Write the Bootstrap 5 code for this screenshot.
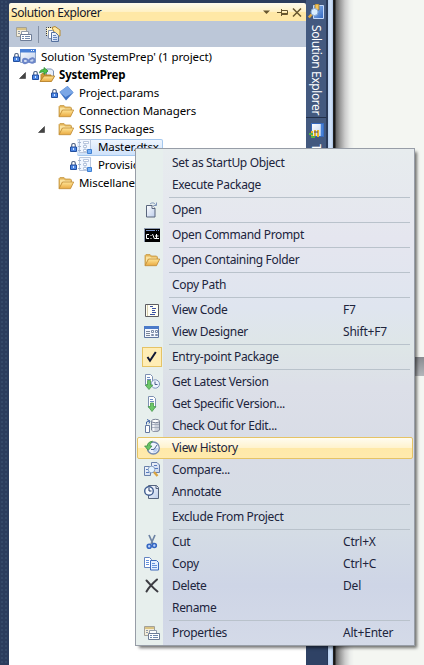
<!DOCTYPE html>
<html lang="en">
<head>
<meta charset="utf-8">
<meta name="viewport" content="width=device-width, initial-scale=1">
<title>Solution Explorer</title>
<link href="https://cdn.jsdelivr.net/npm/bootstrap@5.3.0/dist/css/bootstrap.min.css" rel="stylesheet">
<style>
body{width:424px;height:665px;background:#f4f6f2;font:12px/18px "Noto Sans","Open Sans",sans-serif;color:#000}
svg{display:block;flex:none}
.edge{width:9px;background-color:#2c3d5d;background-image:radial-gradient(#354968 35%,transparent 40%);background-size:4px 4px}
.pane{width:297px;padding-top:3px;background:#2c3d5d}
.pane-title{height:18px;padding:0 4px 0 2px;background:linear-gradient(#fffbec,#fff1c5 48%,#ffe8a6 52%,#ffe8a6);border-radius:2px 2px 0 0;color:#15182a;line-height:17px;letter-spacing:-.38px}
.pane-tools{height:26px;background:#bcc7d8;padding-left:7px}
.tool-line{width:1px;height:17px;background:#8591a5;margin:0 6px 0 6px}
.tree{background:#fff;padding-top:1px}
.node{height:18px;font-size:11.5px;letter-spacing:-.09px;white-space:nowrap}
.node .lock{width:7px}
.lv0{padding-left:4px}.lv1{padding-left:10px}.lv2{padding-left:42px}.lv2x{padding-left:29px}.lv3{padding-left:61px}
.lv1 .lock{margin-left:6px}
.lv2x .arrow{margin-right:13px}
.node-label{margin-left:5px}
.lv1 .node-label{margin-left:4px;letter-spacing:-.15px}
.picked{height:17px;border:1px solid #a5c8ee;border-left:0;border-radius:2px;background:linear-gradient(#eef5fe,#cfe2fa);padding-right:3px}
.side{width:21px;background:#2f4265}
.side-tab{width:21px;background:#43597f;border-right:1px solid #2b3b59;border-bottom:1px solid #22304a;color:#fff;padding-top:5px}
.side-tab.first{height:118px;padding-top:4px}
.side-tab span{writing-mode:vertical-rl;line-height:19px;margin-top:5px;white-space:nowrap;letter-spacing:-.4px}
.rim{width:7px;background:linear-gradient(90deg,#273858 1px,#b9d1f2 1px,#d3e4fa 4px,#a9c1e2 6px,#222 6px)}
.shade{width:20px;background:linear-gradient(90deg,#161616 0 1px,#666 2px,#999 6px,#ccc 11px,#eaecea 16px,#f4f6f2)}
.far-band{height:19px;margin-top:357px;background:linear-gradient(#898b90,#b4b7bb)}
.ctx{left:135px;top:148px;width:280px;height:498px;padding:3px 1px 1px;border:1px solid #979da7;box-shadow:3px 3px 3px -1px rgba(0,0,0,.55);color:#20243c;
background:linear-gradient(90deg,#e7efed 27px,transparent 27px),linear-gradient(#e7ecee 0,#e5e6ef 18%,#dfe5ef 32%,#dee6e7 40%,#dcdfe8 48%,#d8dce6 62%,#d5dde5 76%,#ced5e6 88%,#d4dae8)}
.cmd{height:22px;line-height:20px;padding:0 1px;border:1px solid transparent;white-space:nowrap}
.cmd-icon{width:26px;height:22px}
.cmd-name{width:171px;margin-left:7px;letter-spacing:-.33px}
.cmd-key{letter-spacing:-.2px}
.cmd.hot{border-color:#e5c365;border-radius:2px;background:linear-gradient(#fffcf0,#fff3cf 48%,#ffe9a8 52%,#ffeaae)}
.rule{height:1px;margin:1px 3px 1px 32px;background:#b9c2cb}
.ticked{width:20px;height:20px;border:1px solid #e5c365;background:#ffedb5}
</style>
<script src="https://cdn.jsdelivr.net/npm/bootstrap@5.3.0/dist/js/bootstrap.bundle.min.js"></script>
</head>
<body class="overflow-hidden position-relative m-0">
<svg width="0" height="0" class="position-absolute">
<defs>
<linearGradient id="gold" x2="0" y2="1"><stop stop-color="#ffe596"/><stop offset="1" stop-color="#e9a940"/></linearGradient>
<linearGradient id="blue" x2="1" y2="1"><stop stop-color="#9cc4f5"/><stop offset="1" stop-color="#2c62bd"/></linearGradient>
<linearGradient id="paper" x2="1" y2="1"><stop stop-color="#fff"/><stop offset="1" stop-color="#bccdeb"/></linearGradient>
</defs>
<symbol id="lock" viewBox="0 0 7 9"><path d="M1.700 4V2.300a1.800 1.800 0 0 1 3.600 0V4" fill="none" stroke="#5a6c8c" stroke-width="1.200"/><path d="M.5 4h6v4.500h-6z" fill="#4c86e4" stroke="#234f9e"/><path d="M3 5h1v2H3z" fill="#d8e8ff"/></symbol>
<symbol id="folder" viewBox="0 0 16 16"><path d="M1 13.500V3.500l1-1h4l1.500 1.500h5l1 1V8" fill="#e3b45a" stroke="#c89c4a" stroke-width=".8"/><path d="M2 4.500h4l1 1h5.500V7H4L2 11z" fill="#fbe3a0"/><path d="M1 13.700 4.500 7h11.200l-3.200 6.700z" fill="url(#gold)" stroke="#bf8a35" stroke-width=".8"/></symbol>
<symbol id="props" viewBox="0 0 16 16"><path d="M.5 1.500h10v9H.5z" fill="#f4edda" stroke="#a3a199"/><path d="M1 2h9v2H1z" fill="#d9c384"/><path d="M2 5.500h2M2 7.500h2" stroke="#8e99a8"/><path d="M5.500 5.500h7v3h-7z" fill="#fff" stroke="#909bab"/><path d="M4.500 8.500h11v6h-11z" fill="#fff" stroke="#6d7c97"/><path d="M6 10.500h2m1 0h5m-8 2h2m1 0h5" stroke="#7189ad"/></symbol>
<symbol id="showall" viewBox="0 0 16 16"><path d="M1.500 10V1.500H12" fill="#fff5cb" stroke="#333" stroke-dasharray="1 1"/><path d="M7 1.500l3-1 5 3.500v6h-4z" fill="#ffe7a0" stroke="#b58a30"/><path d="M3.500 4.500h4l2 2v6h-6z" fill="#fff" stroke="#8292b0"/><path d="M6.500 6.500h4l3 3v6h-7z" fill="url(#paper)" stroke="#56719f"/><path d="M8 9.500h3m-3 2h4m-4 2h4" stroke="#6487c2"/></symbol>
<symbol id="sln" viewBox="0 0 16 16"><path d="M.5.5h15v13H.5z" fill="url(#paper)" stroke="#8fa5c8"/><path d="M0 0h16v3.500H0z" fill="#4a80d6"/><path d="M11 1.500h1m1 0h1" stroke="#fff"/><path d="M8.500 12C6.500 9 3 9.300 3 12s3.500 3 5.500 0 6-3.800 6-.7-4 3.200-6 .7z" fill="none" stroke="#6c86c9" stroke-width="2"/></symbol>
<symbol id="proj" viewBox="0 0 16 16"><path d="M7.500 2h5l2 2v7h-7z" fill="#e6edfa" stroke="#7f93b5"/><path d="M2 14V7.500l1-1h3l1 1.500h5V10" fill="#ce9836" stroke="#bd8c35"/><path d="M1 14.500 5 9h10.700l-3.200 5.500z" fill="url(#gold)" stroke="#af771c" stroke-width=".8"/><path d="M.5 6C1 3 2.500 2.500 5 2.500V.5L9 4 5 7.500V5C3 5 1.500 5.200.5 6z" fill="#4ec146" stroke="#2d8a34" stroke-width=".8"/></symbol>
<symbol id="param" viewBox="0 0 16 16"><path d="M1.500 7 9.500 1 15.500 7.500 8 15.500z" fill="#3d72c4"/><path d="M1.500 7 9.500 1 15.500 7.500 7.500 12z" fill="#7ba7e6"/></symbol>
<symbol id="pkg" viewBox="0 0 16 16"><path d="M2.500.5h11v13h-11z" fill="#f2f7ff" stroke="#bac7dc"/><path d="M1 3.500h3m-3 4h3m-3 4h3" stroke="#a5b6d2"/><path d="M6.500 2.500h5v2h-5zm0 4h3v2h-3zm0 4h3v2h-3zM8 4.500v2m0 2v2" fill="#fff" stroke="#a9bad6" stroke-width=".8"/><path d="M10.500 10.500h4v4h-4z" fill="#73b0f8" stroke="#3f7fd2"/></symbol>
<symbol id="seek" viewBox="0 0 16 16"><path d="M5.500 1.500h10v13h-10z" fill="url(#blue)" stroke="#c5dafb"/><path d="M7 0h4v6H7z" fill="#f2c45b" stroke="#8c6a24" stroke-width=".7"/><path d="M4 10 .8 13.500" stroke="#e4a738" stroke-width="2.500"/><circle cx="6.500" cy="8" r="3.500" fill="#d9edff" stroke="#8aabd6"/></symbol>
<symbol id="team" viewBox="0 0 16 16"><path d="M3.500.5h12v13h-12z" fill="url(#paper)" stroke="#3568bd"/><path d="M14 1v12" stroke="#4780d6" stroke-width="2.500"/><path d="M4 8v6M7 7v6m3-6v7" stroke="#e6b72a" stroke-width="2"/><path d="M1 11h4m-2 3h4" stroke="#58b044" stroke-width="2"/><path d="M6 9h4" stroke="#446"/></symbol>
<symbol id="open" viewBox="0 0 16 16"><path d="M2.500 3.500h5.500l3 3v8.500H2.500z" fill="url(#paper)" stroke="#59657c"/><path d="M8 3.500v3h3" fill="#fff" stroke="#59657c"/><path d="M6 2c2-1.800 4.500-1.300 5.500.7M12.500.5v3H9.500" fill="none" stroke="#7d93b8"/></symbol>
<symbol id="cli" viewBox="0 0 16 16"><path d="M0 1h16v14H0z" fill="#000"/><path d="M0 1.500h16M.5 1v14" stroke="#8b97ad"/><path d="M2 3.500h9m1 0h1m1 0h1" stroke="#7894cd"/><path d="M5 7.500H2.500v4H5m2-3.500v1m0 2v1m1.500-5 2 5m2-5v4m-1.500-2h3.500M11 11.500h4" fill="none" stroke="#fff"/></symbol>
<symbol id="code" viewBox="0 0 16 16"><path d="M1.500 2.500h13v12h-13z" fill="#fffef4" stroke="#5d5d62"/><path d="M3.500 3v11" stroke="#d6cfae"/><path d="M6 4.500h3m-1 2h4m-4 2h3m-3 2h4m-6 2h5" stroke="#3b52a4"/></symbol>
<symbol id="form" viewBox="0 0 16 16"><path d="M.5 2.500h14v11H.5z" fill="#f5f8ff" stroke="#5f76a1"/><path d="M0 2h15v3H0z" fill="#4b7bc9"/><path d="M2 7.500h4m-4 2h4m-4 2h4" stroke="#7a8597"/><path d="M7.500 6.500h2v2h-2zm4 0h2v2h-2zm-4 4h2v1h-2zm4 0h2v1h-2z" fill="#fff" stroke="#7b8ba8"/></symbol>
<symbol id="latest" viewBox="0 0 16 16"><path d="M1.500.5h5l2 2v8h-7z" fill="#fff" stroke="#7e90b1"/><path d="M3 3.500h3m-3 2h4" stroke="#6f8cc2"/><circle cx="11.300" cy="10" r="4.200" fill="#eef4ff" stroke="#7d94bb"/><path d="M11 7.500v3h2.500" fill="none" stroke="#4b5f89"/><path d="M3.500 6.500h3V11h2.300L5 15.500 1.200 11h2.300z" fill="#6cc867" stroke="#4a9a4c" stroke-width=".8"/></symbol>
<symbol id="specific" viewBox="0 0 16 16"><path d="M4.500.5h5l2 2v9h-7z" fill="#fff" stroke="#7e90b1"/><path d="M6 3.500h3m-3 2h4" stroke="#6f8cc2"/><path d="M6.500 7h3v3.500h2.300L8 15.500l-3.800-5h2.300z" fill="#6cc867" stroke="#4a9a4c" stroke-width=".8"/></symbol>
<symbol id="checkout" viewBox="0 0 16 16"><path d="M1.500 7.500h4v7h-4z" fill="#fff" stroke="#6479a0"/><path d="M2.500 6.500V4L5.500 3M3 1.500l3 1.500-1 2.500" fill="none" stroke="#3f62a2"/><path d="M7.500 3v9c1 2 7 2 8 0V3" fill="#cbd0da" stroke="#7b8497"/><ellipse cx="11.500" cy="3" rx="4" ry="1.700" fill="#fff" stroke="#7b8497"/><path d="M9.500 5v8" stroke="#f3f5f9" stroke-width="2"/><path d="M8 6.500h7m-7 3h7" stroke="#99a3b5" stroke-width=".8"/></symbol>
<symbol id="history" viewBox="0 0 16 16"><circle cx="9.300" cy="8" r="6" fill="#eef3fd" stroke="#7288b0" stroke-width="1.300"/><path d="M9.300 12.500A5 5 0 0 0 14 8h-4.500z" fill="#b9cdf0"/><path d="M7 9.500h3L13 5" fill="none" stroke="#51658c"/><path d="M8.500 1.300C5 1.500 3.300 3.700 3.300 6H.6L4.300 10.300 8 6H6c0-2 1-3.500 2.500-4.700z" fill="#67c463" stroke="#419048" stroke-width=".8"/></symbol>
<symbol id="compare" viewBox="0 0 16 16"><path d="M.5 4.500h6v9h-6zM7.500.5h5.500l2.500 2.500v7.500h-8z" fill="url(#paper)" stroke="#6980aa"/><path d="M2 7.500h3m-3 3h3m5-7h3m-3 3h4" stroke="#567bbd"/><circle cx="7.500" cy="7.500" r="3.300" fill="#e3f3ff" stroke="#8ba1c4"/><path d="M10 10l3.500 4" stroke="#d9a443" stroke-width="2.400"/></symbol>
<symbol id="annotate" viewBox="0 0 16 16"><path d="M4.500 1.500h8l2 2v11h-10z" fill="url(#paper)" stroke="#56647f"/><path d="M12 1.500v3h2.500" fill="none" stroke="#56647f"/><circle cx="5" cy="7" r="4.300" fill="#f5f9ff" stroke="#3f5c90" stroke-width="1.400"/><path d="M5 4v3h2.500" fill="none" stroke="#223967"/></symbol>
<symbol id="cut" viewBox="0 0 16 16"><path d="M5 1 9 10M11 1 7 10" stroke="#6c82a3" stroke-width="1.700"/><circle cx="5.200" cy="12.300" r="2" fill="#b9d1fa" stroke="#3567c2" stroke-width="1.600"/><circle cx="10.300" cy="11.500" r="2" fill="#b9d1fa" stroke="#3567c2" stroke-width="1.600"/></symbol>
<symbol id="copy" viewBox="0 0 16 16"><path d="M.5 1.500h5l2 2v8h-7z" fill="#fff" stroke="#6384c2"/><path d="M6.500 4.500h6l2 2v7.500h-8z" fill="#e3eeff" stroke="#3c69ba"/><path d="M2 4.500h3m-3 2h3m-3 2h3m3-1h3m-3 2h5m-5 2h5" stroke="#6591da"/></symbol>
<symbol id="del" viewBox="0 0 16 16"><path d="M2.500 2.500C6 6 9 10 13.500 13.500M13 1.500C9 5 5 9 2.500 13.500" fill="none" stroke="#3c3c42" stroke-width="2" stroke-linecap="round"/></symbol>
<symbol id="tick" viewBox="0 0 16 16"><path d="M3.500 8 6 11.800 11.800 3" fill="none" stroke="#111735" stroke-width="2"/></symbol>
<symbol id="tri" viewBox="0 0 7 7"><path d="M6.500.5v6h-6z" fill="#444" stroke="#222" stroke-width=".5"/></symbol>
</svg>

<div class="d-flex h-100">
  <div class="edge"></div>
  <main class="pane d-flex flex-column">
    <header class="pane-title d-flex align-items-center">
      <span class="me-auto">Solution Explorer</span>
      <svg width="40" height="12" viewBox="0 0 40 12" stroke="#67562e" fill="none"><path d="M1 4.500h7L4.500 8z" fill="#67562e" stroke="none"/><path d="M15 6.500h4M19.500 3v7M20 4.500h5.500v4H20M20 7.500h6"/><path d="M31 2.500l8 8m0-8-8 8" stroke-width="1.500"/></svg>
    </header>
    <div class="pane-tools d-flex align-items-center">
      <svg width="16" height="16"><use href="#props"/></svg><div class="tool-line"></div><svg width="16" height="16"><use href="#showall"/></svg>
    </div>
    <div class="tree flex-grow-1">
      <div class="node d-flex align-items-center lv0"><svg class="lock" height="9"><use href="#lock"/></svg><svg width="16" height="16"><use href="#sln"/></svg><span class="node-label">Solution 'SystemPrep' (1 project)</span></div>
      <div class="node d-flex align-items-center lv1"><svg width="7" height="7"><use href="#tri"/></svg><svg class="lock" height="9"><use href="#lock"/></svg><svg width="16" height="16"><use href="#proj"/></svg><b class="node-label">SystemPrep</b></div>
      <div class="node d-flex align-items-center lv2"><svg class="lock" height="9"><use href="#lock"/></svg><svg width="16" height="16"><use href="#param"/></svg><span class="node-label">Project.params</span></div>
      <div class="node d-flex align-items-center lv2"><span class="lock"></span><svg width="16" height="16"><use href="#folder"/></svg><span class="node-label">Connection Managers</span></div>
      <div class="node d-flex align-items-center lv2x"><svg class="arrow" width="7" height="7"><use href="#tri"/></svg><svg width="16" height="16"><use href="#folder"/></svg><span class="node-label">SSIS Packages</span></div>
      <div class="node d-flex align-items-center lv3"><svg class="lock" height="9"><use href="#lock"/></svg><span class="picked d-flex align-items-center"><svg width="16" height="16"><use href="#pkg"/></svg><span class="node-label">Master.dtsx</span></span></div>
      <div class="node d-flex align-items-center lv3"><svg class="lock" height="9"><use href="#lock"/></svg><svg width="16" height="16"><use href="#pkg"/></svg><span class="node-label">Provision.dtsx</span></div>
      <div class="node d-flex align-items-center lv2"><span class="lock"></span><svg width="16" height="16"><use href="#folder"/></svg><span class="node-label">Miscellaneous</span></div>
    </div>
  </main>
  <aside class="side">
    <div class="side-tab first d-flex flex-column align-items-center"><svg width="16" height="16"><use href="#seek"/></svg><span>Solution Explorer</span></div>
    <div class="side-tab d-flex flex-column align-items-center"><svg width="16" height="16"><use href="#team"/></svg><span>Team Explorer</span></div>
  </aside>
  <div class="rim"></div>
  <div class="shade"></div>
  <div class="flex-grow-1"><div class="far-band"></div></div>
</div>

<nav class="ctx position-absolute">
  <div class="cmd d-flex"><i class="cmd-icon"></i><span class="cmd-name">Set as StartUp Object</span></div>
  <div class="cmd d-flex"><i class="cmd-icon"></i><span class="cmd-name">Execute Package</span></div>
  <div class="rule"></div>
  <div class="cmd d-flex align-items-center"><i class="cmd-icon d-flex align-items-center justify-content-center"><svg width="16" height="16"><use href="#open"/></svg></i><span class="cmd-name">Open</span></div>
  <div class="rule"></div>
  <div class="cmd d-flex align-items-center"><i class="cmd-icon d-flex align-items-center justify-content-center"><svg width="16" height="16"><use href="#cli"/></svg></i><span class="cmd-name">Open Command Prompt</span></div>
  <div class="rule"></div>
  <div class="cmd d-flex align-items-center"><i class="cmd-icon d-flex align-items-center justify-content-center"><svg width="16" height="16"><use href="#folder"/></svg></i><span class="cmd-name">Open Containing Folder</span></div>
  <div class="rule"></div>
  <div class="cmd d-flex"><i class="cmd-icon"></i><span class="cmd-name">Copy Path</span></div>
  <div class="rule"></div>
  <div class="cmd d-flex align-items-center"><i class="cmd-icon d-flex align-items-center justify-content-center"><svg width="16" height="16"><use href="#code"/></svg></i><span class="cmd-name">View Code</span><span class="cmd-key">F7</span></div>
  <div class="cmd d-flex align-items-center"><i class="cmd-icon d-flex align-items-center justify-content-center"><svg width="16" height="16"><use href="#form"/></svg></i><span class="cmd-name">View Designer</span><span class="cmd-key">Shift+F7</span></div>
  <div class="rule"></div>
  <div class="cmd d-flex align-items-center"><i class="cmd-icon d-flex align-items-center justify-content-center"><span class="ticked d-flex align-items-center justify-content-center"><svg width="16" height="16"><use href="#tick"/></svg></span></i><span class="cmd-name">Entry-point Package</span></div>
  <div class="rule"></div>
  <div class="cmd d-flex align-items-center"><i class="cmd-icon d-flex align-items-center justify-content-center"><svg width="16" height="16"><use href="#latest"/></svg></i><span class="cmd-name">Get Latest Version</span></div>
  <div class="cmd d-flex align-items-center"><i class="cmd-icon d-flex align-items-center justify-content-center"><svg width="16" height="16"><use href="#specific"/></svg></i><span class="cmd-name">Get Specific Version...</span></div>
  <div class="cmd d-flex align-items-center"><i class="cmd-icon d-flex align-items-center justify-content-center"><svg width="16" height="16"><use href="#checkout"/></svg></i><span class="cmd-name">Check Out for Edit...</span></div>
  <div class="cmd hot d-flex align-items-center"><i class="cmd-icon d-flex align-items-center justify-content-center"><svg width="16" height="16"><use href="#history"/></svg></i><span class="cmd-name">View History</span></div>
  <div class="cmd d-flex align-items-center"><i class="cmd-icon d-flex align-items-center justify-content-center"><svg width="16" height="16"><use href="#compare"/></svg></i><span class="cmd-name">Compare...</span></div>
  <div class="cmd d-flex align-items-center"><i class="cmd-icon d-flex align-items-center justify-content-center"><svg width="16" height="16"><use href="#annotate"/></svg></i><span class="cmd-name">Annotate</span></div>
  <div class="rule"></div>
  <div class="cmd d-flex"><i class="cmd-icon"></i><span class="cmd-name">Exclude From Project</span></div>
  <div class="rule"></div>
  <div class="cmd d-flex align-items-center"><i class="cmd-icon d-flex align-items-center justify-content-center"><svg width="16" height="16"><use href="#cut"/></svg></i><span class="cmd-name">Cut</span><span class="cmd-key">Ctrl+X</span></div>
  <div class="cmd d-flex align-items-center"><i class="cmd-icon d-flex align-items-center justify-content-center"><svg width="16" height="16"><use href="#copy"/></svg></i><span class="cmd-name">Copy</span><span class="cmd-key">Ctrl+C</span></div>
  <div class="cmd d-flex align-items-center"><i class="cmd-icon d-flex align-items-center justify-content-center"><svg width="16" height="16"><use href="#del"/></svg></i><span class="cmd-name">Delete</span><span class="cmd-key">Del</span></div>
  <div class="cmd d-flex"><i class="cmd-icon"></i><span class="cmd-name">Rename</span></div>
  <div class="rule"></div>
  <div class="cmd d-flex align-items-center"><i class="cmd-icon d-flex align-items-center justify-content-center"><svg width="16" height="16"><use href="#props"/></svg></i><span class="cmd-name">Properties</span><span class="cmd-key">Alt+Enter</span></div>
</nav>
</body>
</html>
